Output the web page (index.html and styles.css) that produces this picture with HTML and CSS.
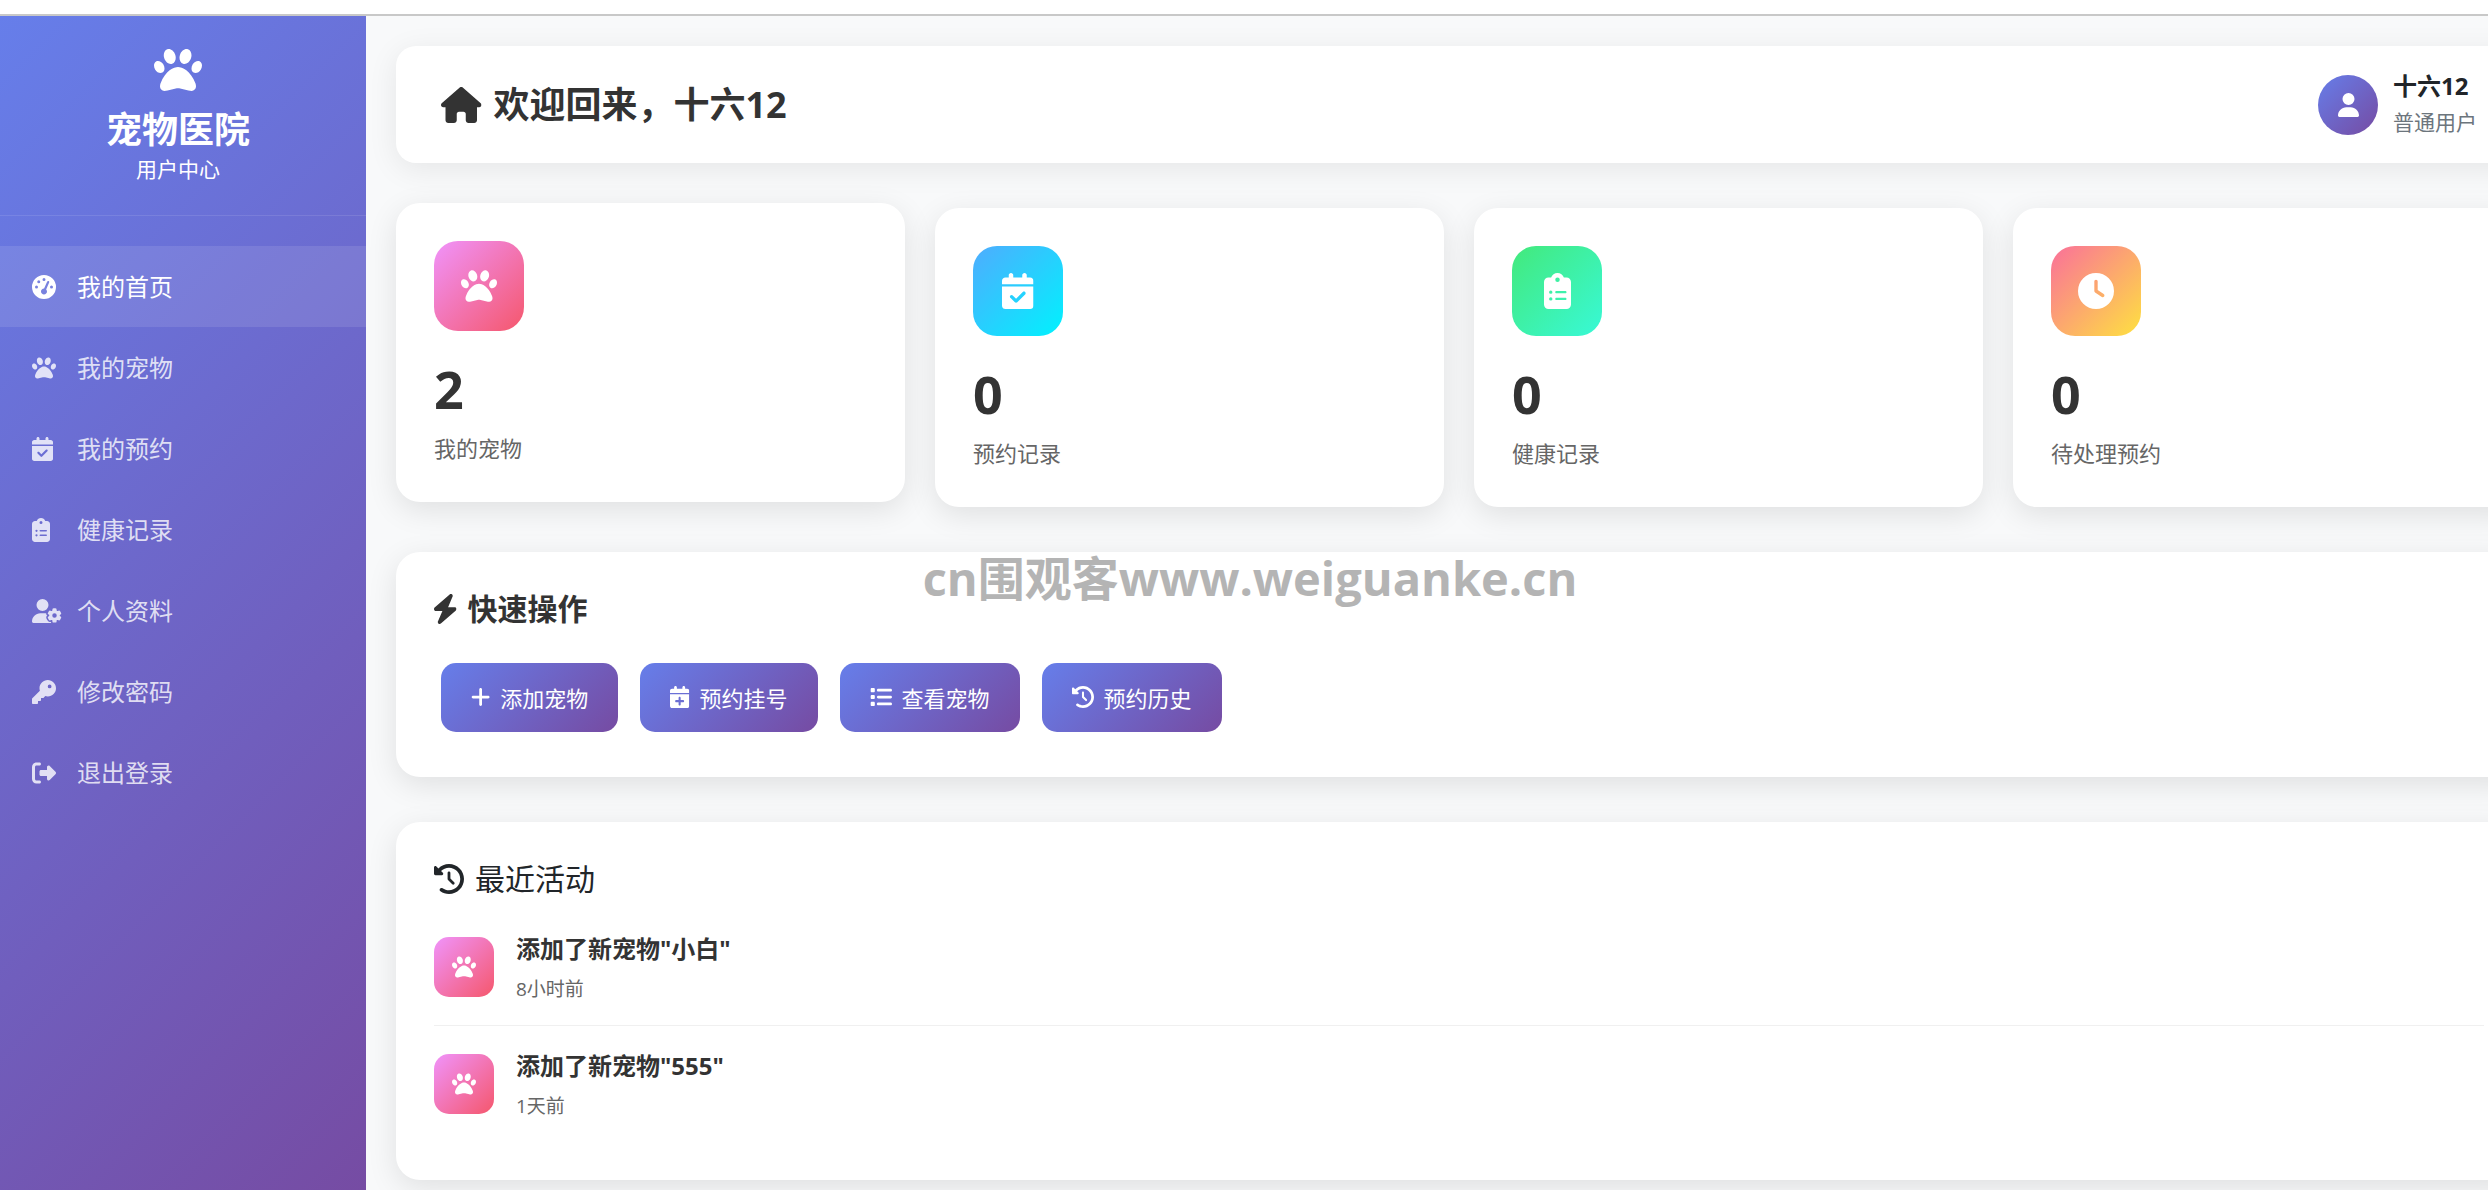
FILE: index.html
```html
<!DOCTYPE html>
<html lang="zh-CN">
<head>
    <meta charset="UTF-8">
    <meta name="viewport" content="width=device-width, initial-scale=1.0">
    <title>宠物医院 - 用户中心</title>
    <link rel="stylesheet" href="styles.css">
</head>
<body>
    <!-- icon sprite -->
    <svg class="sprite" xmlns="http://www.w3.org/2000/svg">
        <symbol id="i-paw" viewBox="0 0 512 512"><path d="M226.5 92.9c14.3 42.9-.3 86.2-32.6 96.8s-70.1-15.6-84.4-58.5s.3-86.2 32.6-96.8s70.1 15.6 84.4 58.5zM100.4 198.6c18.9 32.4 14.3 70.1-10.2 84.1s-59.7-.9-78.5-33.3S-2.7 179.3 21.8 165.3s59.7 .9 78.5 33.3zM69.2 401.2C121.6 259.9 214.7 224 256 224s134.4 35.9 186.8 177.2c3.6 9.7 5.2 20.1 5.2 30.5v1.6c0 25.8-20.9 46.7-46.7 46.7c-11.5 0-22.9-1.4-34-4.2l-88-22c-15.3-3.8-31.3-3.8-46.6 0l-88 22c-11.1 2.8-22.5 4.2-34 4.2C84.9 480 64 459.1 64 433.3v-1.6c0-10.4 1.6-20.8 5.2-30.5zM421.8 282.7c-24.5-14-29.1-51.7-10.2-84.1s54-47.3 78.5-33.3s29.1 51.7 10.2 84.1s-54 47.3-78.5 33.3zM310.1 189.7c-32.3-10.6-46.9-53.9-32.6-96.8s52.1-69.1 84.4-58.5s46.9 53.9 32.6 96.8s-52.1 69.1-84.4 58.5z"/></symbol>
        <symbol id="i-home" viewBox="0 0 576 512"><path d="M575.8 255.5c0 18-15 32.1-32 32.1h-32l.7 160.2c0 2.7-.2 5.4-.5 8.1V472c0 22.1-17.9 40-40 40H456c-1.1 0-2.2 0-3.3-.1c-1.4 .1-2.8 .1-4.2 .1H416 392c-22.1 0-40-17.9-40-40V448 384c0-17.7-14.3-32-32-32H256c-17.7 0-32 14.3-32 32v64 24c0 22.1-17.9 40-40 40H160 128.1c-1.5 0-3-.1-4.5-.2c-1.2 .1-2.4 .2-3.6 .2H104c-22.1 0-40-17.9-40-40V360c0-.9 0-1.9 .1-2.8V287.6H32c-18 0-32-14-32-32.1c0-9 3-17 10-24L266.4 8c7-7 15-8 22-8s15 2 21 7L564.8 231.5c8 7 12 15 11 24z"/></symbol>
        <symbol id="i-gauge" viewBox="0 0 512 512"><path fill-rule="evenodd" d="M0 256a256 256 0 1 1 512 0A256 256 0 1 1 0 256zM288 96a32 32 0 1 0 -64 0 32 32 0 1 0 64 0zM256 416c35.3 0 64-28.7 64-64c0-17.4-6.9-33.1-18.1-44.6L366 161.7c5.3-12.1-.2-26.3-12.3-31.6s-26.3 .2-31.6 12.3L257.9 288c-.6 0-1.3 0-1.9 0c-35.3 0-64 28.7-64 64s28.7 64 64 64zM176 144a32 32 0 1 0 -64 0 32 32 0 1 0 64 0zM96 288a32 32 0 1 0 0-64 32 32 0 1 0 0 64zm352-32a32 32 0 1 0 -64 0 32 32 0 1 0 64 0z"/></symbol>
        <symbol id="i-calendar-check" viewBox="0 0 448 512"><path fill-rule="evenodd" d="M128 0c17.7 0 32 14.3 32 32V64H288V32c0-17.7 14.3-32 32-32s32 14.3 32 32V64h48c26.5 0 48 21.5 48 48v48H0V112C0 85.5 21.5 64 48 64H96V32c0-17.7 14.3-32 32-32zM0 192H448V464c0 26.5-21.5 48-48 48H48c-26.5 0-48-21.5-48-48V192zM329 305c9.4-9.4 9.4-24.6 0-33.9s-24.6-9.4-33.9 0l-95 95-47-47c-9.4-9.4-24.6-9.4-33.9 0s-9.4 24.6 0 33.9l64 64c9.4 9.4 24.6 9.4 33.9 0L329 305z"/></symbol>
        <symbol id="i-calendar-plus" viewBox="0 0 448 512"><path fill-rule="evenodd" d="M96 32V64H48C21.5 64 0 85.5 0 112v48H448V112c0-26.5-21.5-48-48-48H352V32c0-17.7-14.3-32-32-32s-32 14.3-32 32V64H160V32c0-17.7-14.3-32-32-32S96 14.3 96 32zM448 192H0V464c0 26.5 21.5 48 48 48H400c26.5 0 48-21.5 48-48V192zM224 248c13.3 0 24 10.7 24 24v56h56c13.3 0 24 10.7 24 24s-10.7 24-24 24H248v56c0 13.3-10.7 24-24 24s-24-10.7-24-24V376H144c-13.3 0-24-10.7-24-24s10.7-24 24-24h56V272c0-13.3 10.7-24 24-24z"/></symbol>
        <symbol id="i-clipboard" viewBox="0 0 384 512"><path fill-rule="evenodd" d="M192 0c-41.8 0-77.4 26.7-90.5 64H64C28.7 64 0 92.7 0 128V448c0 35.3 28.7 64 64 64H320c35.3 0 64-28.7 64-64V128c0-35.3-28.7-64-64-64H282.5C269.4 26.7 233.8 0 192 0zm0 64a32 32 0 1 1 0 64 32 32 0 1 1 0-64zM72 272a24 24 0 1 1 48 0 24 24 0 1 1 -48 0zm104-16H304c8.8 0 16 7.2 16 16s-7.2 16-16 16H176c-8.8 0-16-7.2-16-16s7.2-16 16-16zM72 368a24 24 0 1 1 48 0 24 24 0 1 1 -48 0zm88 0c0-8.8 7.2-16 16-16H304c8.8 0 16 7.2 16 16s-7.2 16-16 16H176c-8.8 0-16-7.2-16-16z"/></symbol>
        <symbol id="i-user-cog" viewBox="0 0 640 512"><path d="M224 0a128 128 0 1 1 0 256A128 128 0 1 1 224 0zM178.3 304h91.4c11.8 0 23.4 1.2 34.5 3.3c-2.1 18.5 7.4 35.6 21.8 44.8c-16.6 10.6-26.7 31.6-20 53.3c4 12.9 9.4 25.5 16.4 37.6s15.2 23.1 24.4 33c15.7 16.9 39.6 18.4 57.2 8.7v.9c0 9.2 2.7 18.5 7.9 26.3H29.7C13.3 512 0 498.7 0 482.3C0 383.8 79.8 304 178.3 304z"/><path fill-rule="evenodd" d="M436 218.2c0-7 4.5-13.3 11.3-14.8c10.5-2.4 21.5-3.7 32.7-3.7s22.2 1.3 32.7 3.7c6.8 1.5 11.3 7.8 11.3 14.8v17.7c0 7.8 4.8 14.8 11.6 18.7c6.8 3.9 15.1 4.5 21.8 .6l13.8-7.9c6.1-3.5 13.7-2.7 18.5 2.4c7.6 8.1 14.3 17.2 20.1 27.2s10.3 20.4 13.5 31c2.1 6.7-1.1 13.7-7.2 17.2l-14.4 8.3c-6.5 3.7-10 10.9-10 18.4s3.5 14.7 10 18.4l14.4 8.3c6.1 3.5 9.2 10.5 7.2 17.2c-3.3 10.6-7.8 21-13.5 31s-12.5 19.1-20.1 27.2c-4.8 5.1-12.5 5.9-18.5 2.4l-13.8-7.9c-6.7-3.9-15.1-3.3-21.8 .6c-6.8 3.9-11.6 10.9-11.6 18.7v17.7c0 7-4.5 13.3-11.3 14.8c-10.5 2.4-21.5 3.7-32.7 3.7s-22.2-1.3-32.7-3.7c-6.8-1.5-11.3-7.8-11.3-14.8V467.5c0-7.8-4.8-14.8-11.6-18.7c-6.8-3.9-15.1-4.5-21.8-.6l-13.8 7.9c-6.1 3.5-13.7 2.7-18.5-2.4c-7.6-8.1-14.3-17.2-20.1-27.2s-10.3-20.4-13.5-31c-2.1-6.7 1.1-13.7 7.2-17.2l14.4-8.3c6.5-3.7 10-10.9 10-18.4s-3.5-14.7-10-18.4l-14.4-8.3c-6.1-3.5-9.2-10.5-7.2-17.2c3.3-10.6 7.8-21 13.5-31s12.5-19.1 20.1-27.2c4.8-5.1 12.5-5.9 18.5-2.4l13.8 7.9c6.7 3.9 15.1 3.3 21.8-.6c6.8-3.9 11.6-10.9 11.6-18.7V218.2zM480 303.6a48 48 0 1 0 0 96 48 48 0 1 0 0-96z"/></symbol>
        <symbol id="i-key" viewBox="0 0 512 512"><path fill-rule="evenodd" d="M336 352c97.2 0 176-78.8 176-176S433.2 0 336 0S160 78.8 160 176c0 18.7 2.9 36.8 8.3 53.7L7 391c-4.5 4.5-7 10.6-7 17v80c0 13.3 10.7 24 24 24h80c13.3 0 24-10.7 24-24V448h40c13.3 0 24-10.7 24-24V384h40c6.4 0 12.5-2.5 17-7l33.3-33.3c16.9 5.4 35 8.3 53.7 8.3zM376 96a40 40 0 1 1 0 80 40 40 0 1 1 0-80z"/></symbol>
        <symbol id="i-logout" viewBox="0 0 512 512"><path d="M377.9 105.9L500.7 228.7c7.2 7.2 11.3 17.1 11.3 27.3s-4.1 20.1-11.3 27.3L377.9 406.1c-6.4 6.4-15 9.9-24 9.9c-18.7 0-33.9-15.2-33.9-33.9l0-62.1-128 0c-17.7 0-32-14.3-32-32l0-64c0-17.7 14.3-32 32-32l128 0 0-62.1c0-18.7 15.2-33.9 33.9-33.9c9 0 17.6 3.6 24 9.9zM160 96L96 96c-17.7 0-32 14.3-32 32l0 256c0 17.7 14.3 32 32 32l64 0c17.7 0 32 14.3 32 32s-14.3 32-32 32l-64 0c-53 0-96-43-96-96L0 128C0 75 43 32 96 32l64 0c17.7 0 32 14.3 32 32s-14.3 32-32 32z"/></symbol>
        <symbol id="i-clock" viewBox="0 0 512 512"><path fill-rule="evenodd" d="M256 0a256 256 0 1 1 0 512A256 256 0 1 1 256 0zM232 120V256c0 8 4 15.5 10.7 20l96 64c11 7.4 25.9 4.4 33.3-6.7s4.4-25.9-6.7-33.3L280 243.2V120c0-13.3-10.7-24-24-24s-24 10.7-24 24z"/></symbol>
        <symbol id="i-user" viewBox="0 0 448 512"><path d="M224 256A128 128 0 1 0 224 0a128 128 0 1 0 0 256zm-45.7 48C79.8 304 0 383.8 0 482.3C0 498.7 13.3 512 29.7 512H418.3c16.4 0 29.7-13.3 29.7-29.7C448 383.8 368.2 304 269.7 304H178.3z"/></symbol>
        <symbol id="i-bolt" viewBox="32 0 384 512"><path d="M349.4 44.6c5.9-13.7 1.5-29.7-10.6-38.5s-28.6-8-39.9 1.8l-256 224c-10 8.8-13.6 22.9-8.9 35.3S50.7 288 64 288H175.5L98.6 467.4c-5.9 13.7-1.5 29.7 10.6 38.5s28.6 8 39.9-1.8l256-224c10-8.8 13.6-22.9 8.9-35.3s-16.6-20.7-30-20.7H272.5L349.4 44.6z"/></symbol>
        <symbol id="i-plus" viewBox="0 0 448 512"><path d="M256 80c0-17.7-14.3-32-32-32s-32 14.3-32 32V224H48c-17.7 0-32 14.3-32 32s14.3 32 32 32H192V432c0 17.7 14.3 32 32 32s32-14.3 32-32V288H400c17.7 0 32-14.3 32-32s-14.3-32-32-32H256V80z"/></symbol>
        <symbol id="i-list" viewBox="0 0 512 512"><path d="M40 48C26.7 48 16 58.7 16 72v48c0 13.3 10.7 24 24 24H88c13.3 0 24-10.7 24-24V72c0-13.3-10.7-24-24-24H40zM192 64c-17.7 0-32 14.3-32 32s14.3 32 32 32H480c17.7 0 32-14.3 32-32s-14.3-32-32-32H192zm0 160c-17.7 0-32 14.3-32 32s14.3 32 32 32H480c17.7 0 32-14.3 32-32s-14.3-32-32-32H192zm0 160c-17.7 0-32 14.3-32 32s14.3 32 32 32H480c17.7 0 32-14.3 32-32s-14.3-32-32-32H192zM16 232v48c0 13.3 10.7 24 24 24H88c13.3 0 24-10.7 24-24V232c0-13.3-10.7-24-24-24H40c-13.3 0-24 10.7-24 24zM40 368c-13.3 0-24 10.7-24 24v48c0 13.3 10.7 24 24 24H88c13.3 0 24-10.7 24-24V392c0-13.3-10.7-24-24-24H40z"/></symbol>
        <symbol id="i-history" viewBox="0 0 512 512"><path d="M75 75L41 41C25.9 25.9 0 36.6 0 57.9V168c0 13.3 10.7 24 24 24H134.1c21.4 0 32.1-25.9 17-41l-30.8-30.8C155 85.5 203 64 256 64c106 0 192 86 192 192s-86 192-192 192c-40.8 0-78.6-12.7-109.7-34.4c-14.5-10.1-34.4-6.6-44.6 7.9s-6.6 34.4 7.9 44.6C151.2 495 201.7 512 256 512c141.4 0 256-114.6 256-256S397.4 0 256 0C185.3 0 121.3 28.7 75 75zm181 53c-13.3 0-24 10.7-24 24V256c0 6.4 2.5 12.5 7 17l72 72c9.4 9.4 24.6 9.4 33.9 0s9.4-24.6 0-33.9l-65-65V152c0-13.3-10.7-24-24-24z"/></symbol>
    </svg>

    <div class="top-strip"></div>

    <div class="layout">
        <nav class="sidebar">
            <div class="sidebar-header">
                <svg class="icon"><use href="#i-paw"/></svg>
                <h4>宠物医院</h4>
                <small>用户中心</small>
            </div>
            <ul class="sidebar-menu">
                <li><a href="#" class="active"><span class="menu-icon"><svg class="icon"><use href="#i-gauge"/></svg></span>我的首页</a></li>
                <li><a href="#"><span class="menu-icon"><svg class="icon"><use href="#i-paw"/></svg></span>我的宠物</a></li>
                <li><a href="#"><span class="menu-icon"><svg class="icon icon-md"><use href="#i-calendar-check"/></svg></span>我的预约</a></li>
                <li><a href="#"><span class="menu-icon"><svg class="icon icon-sm"><use href="#i-clipboard"/></svg></span>健康记录</a></li>
                <li><a href="#"><span class="menu-icon"><svg class="icon icon-xl"><use href="#i-user-cog"/></svg></span>个人资料</a></li>
                <li><a href="#"><span class="menu-icon"><svg class="icon"><use href="#i-key"/></svg></span>修改密码</a></li>
                <li><a href="#"><span class="menu-icon"><svg class="icon"><use href="#i-logout"/></svg></span>退出登录</a></li>
            </ul>
        </nav>

        <main class="main-content">
            <header class="top-header">
                <h1><svg class="icon icon-lg"><use href="#i-home"/></svg>欢迎回来，十六12</h1>
                <div class="user-info">
                    <div class="user-avatar"><svg class="icon icon-md"><use href="#i-user"/></svg></div>
                    <div>
                        <div class="user-name">十六12</div>
                        <div class="user-role">普通用户</div>
                    </div>
                </div>
            </header>

            <section class="stats">
                <div class="stat-card raised">
                    <div class="stat-icon pink"><svg class="icon"><use href="#i-paw"/></svg></div>
                    <div class="stat-number">2</div>
                    <div class="stat-label">我的宠物</div>
                </div>
                <div class="stat-card">
                    <div class="stat-icon blue"><svg class="icon icon-md"><use href="#i-calendar-check"/></svg></div>
                    <div class="stat-number">0</div>
                    <div class="stat-label">预约记录</div>
                </div>
                <div class="stat-card">
                    <div class="stat-icon green"><svg class="icon icon-sm"><use href="#i-clipboard"/></svg></div>
                    <div class="stat-number">0</div>
                    <div class="stat-label">健康记录</div>
                </div>
                <div class="stat-card">
                    <div class="stat-icon orange"><svg class="icon"><use href="#i-clock"/></svg></div>
                    <div class="stat-number">0</div>
                    <div class="stat-label">待处理预约</div>
                </div>
            </section>

            <section class="panel quick-actions">
                <h2><svg class="icon icon-sm"><use href="#i-bolt"/></svg>快速操作</h2>
                <div class="actions">
                    <button type="button" class="action-btn"><svg class="icon icon-md"><use href="#i-plus"/></svg>添加宠物</button>
                    <button type="button" class="action-btn"><svg class="icon icon-md"><use href="#i-calendar-plus"/></svg>预约挂号</button>
                    <button type="button" class="action-btn"><svg class="icon"><use href="#i-list"/></svg>查看宠物</button>
                    <button type="button" class="action-btn"><svg class="icon"><use href="#i-history"/></svg>预约历史</button>
                </div>
            </section>

            <section class="panel recent">
                <h2><svg class="icon"><use href="#i-history"/></svg>最近活动</h2>
                <ul class="activity-list">
                    <li class="activity-item">
                        <div class="activity-icon pink"><svg class="icon"><use href="#i-paw"/></svg></div>
                        <div>
                            <div class="activity-title">添加了新宠物"小白"</div>
                            <div class="activity-time">8小时前</div>
                        </div>
                    </li>
                    <li class="activity-item">
                        <div class="activity-icon pink"><svg class="icon"><use href="#i-paw"/></svg></div>
                        <div>
                            <div class="activity-title">添加了新宠物"555"</div>
                            <div class="activity-time">1天前</div>
                        </div>
                    </li>
                </ul>
            </section>
        </main>
    </div>

    <div class="watermark">cn围观客www.weiguanke.cn</div>
</body>
</html>
```

FILE: styles.css
```css
* {
    box-sizing: border-box;
    margin: 0;
    padding: 0;
}
body {
    background: #f8f9fa;
    color: #212529;
    font-family: "Open Sans", "Noto Sans CJK SC", sans-serif;
    font-size: 24px;
    line-height: 36px;
    overflow: hidden;
    position: relative;
}
ul {
    list-style: none;
}
.sprite {
    display: none;
}
.icon {
    display: block;
    flex: none;
    width: 1em;
    height: 1em;
    fill: currentColor;
}
.icon-sm {
    width: 0.75em;
}
.icon-md {
    width: 0.875em;
}
.icon-lg {
    width: 1.125em;
}
.icon-xl {
    width: 1.25em;
}
.top-strip {
    height: 16px;
    background: #fff;
    border-bottom: 2px solid #c8c8c8;
}
.layout {
    display: flex;
    min-height: calc(100vh - 16px);
}

/* sidebar */
.sidebar {
    flex: none;
    width: 366px;
    background: linear-gradient(135deg, #667eea 0%, #764ba2 100%);
    color: #fff;
}
.sidebar-header {
    display: flex;
    flex-direction: column;
    align-items: center;
    padding: 30px 30px 30px 20px;
    border-bottom: 1px solid rgba(255, 255, 255, 0.1);
}
.sidebar-header .icon {
    font-size: 48px;
    margin-bottom: 12px;
}
.sidebar-header h4 {
    font-size: 36px;
    line-height: 48px;
}
.sidebar-header small {
    font-size: 21px;
    line-height: 31px;
}
.sidebar-menu {
    padding-top: 30px;
}
.sidebar-menu a {
    display: flex;
    align-items: center;
    gap: 15px;
    height: 81px;
    padding: 0 32px;
    color: rgba(255, 255, 255, 0.8);
    text-decoration: none;
}
.sidebar-menu a:hover,
.sidebar-menu a.active {
    background: rgba(255, 255, 255, 0.1);
    color: #fff;
}
.menu-icon {
    width: 30px;
}

/* content, wider than the window on the right side */
.main-content {
    flex: 1;
    min-width: 0;
    margin-right: -64px;
    padding: 30px;
}
.top-header {
    display: flex;
    justify-content: space-between;
    align-items: center;
    margin-bottom: 45px;
    padding: 22px 45px;
    background: #fff;
    border-radius: 20px;
    box-shadow: 0 6px 30px rgba(0, 0, 0, 0.08);
}
.top-header h1 {
    display: flex;
    align-items: center;
    gap: 12px;
    color: #333;
    font-size: 36px;
    line-height: 44px;
}
.user-info {
    display: flex;
    align-items: center;
    gap: 15px;
}
.user-avatar {
    display: flex;
    align-items: center;
    justify-content: center;
    width: 60px;
    height: 60px;
    border-radius: 50%;
    background: linear-gradient(135deg, #667eea 0%, #764ba2 100%);
    color: #fff;
}
.user-name {
    font-weight: bold;
}
.user-role {
    color: #6c757d;
    font-size: 21px;
    line-height: 37px;
}

.stats {
    display: grid;
    grid-template-columns: repeat(4, 1fr);
    gap: 30px;
    margin-bottom: 45px;
}
.stat-card,
.panel {
    background: #fff;
    border-radius: 24px;
    padding: 38px;
    box-shadow: 0 8px 30px rgba(0, 0, 0, 0.1);
}
.stat-card.raised {
    transform: translateY(-5px);
}
.stat-icon {
    display: flex;
    align-items: center;
    justify-content: center;
    width: 90px;
    height: 90px;
    margin-bottom: 23px;
    border-radius: 24px;
    color: #fff;
    font-size: 36px;
}
.pink {
    background: linear-gradient(135deg, #f093fb 0%, #f5576c 100%);
}
.blue {
    background: linear-gradient(135deg, #4facfe 0%, #00f2fe 100%);
}
.green {
    background: linear-gradient(135deg, #43e97b 0%, #38f9d7 100%);
}
.orange {
    background: linear-gradient(135deg, #fa709a 0%, #fee140 100%);
}
.stat-number {
    margin-bottom: 8px;
    color: #333;
    font-size: 52px;
    font-weight: bold;
    line-height: 70px;
}
.stat-label {
    color: #666;
    font-size: 22px;
    line-height: 32px;
}

.panel h2 {
    display: flex;
    align-items: center;
    gap: 11px;
    font-size: 30px;
    line-height: 38px;
}
.quick-actions {
    margin-bottom: 45px;
}
.quick-actions h2 {
    margin-bottom: 28px;
    color: #333;
}
.actions {
    display: flex;
    gap: 22px;
    padding: 7px;
}
.action-btn {
    display: flex;
    align-items: center;
    gap: 10px;
    height: 69px;
    padding: 0 30px 2px;
    border: none;
    border-radius: 15px;
    background: linear-gradient(135deg, #667eea 0%, #764ba2 100%);
    color: #fff;
    font-family: inherit;
    font-size: 22px;
    cursor: pointer;
}
.recent h2 {
    margin-bottom: 11px;
    font-weight: normal;
}
.activity-item {
    display: flex;
    align-items: center;
    gap: 22px;
    padding: 22px 0;
    border-bottom: 1px solid #f0f0f0;
}
.activity-item:last-child {
    border-bottom: none;
}
.activity-icon {
    display: flex;
    align-items: center;
    justify-content: center;
    width: 60px;
    height: 60px;
    border-radius: 15px;
    color: #fff;
}
.activity-title {
    margin-bottom: 8px;
    color: #333;
    font-weight: bold;
}
.activity-time {
    color: #666;
    font-size: 19px;
    line-height: 28px;
}

.watermark {
    position: absolute;
    top: 550px;
    left: 0;
    width: 100%;
    padding-left: 12px;
    color: #b4b4b4;
    font-size: 47px;
    font-weight: bold;
    line-height: 56px;
    text-align: center;
    pointer-events: none;
}
```
